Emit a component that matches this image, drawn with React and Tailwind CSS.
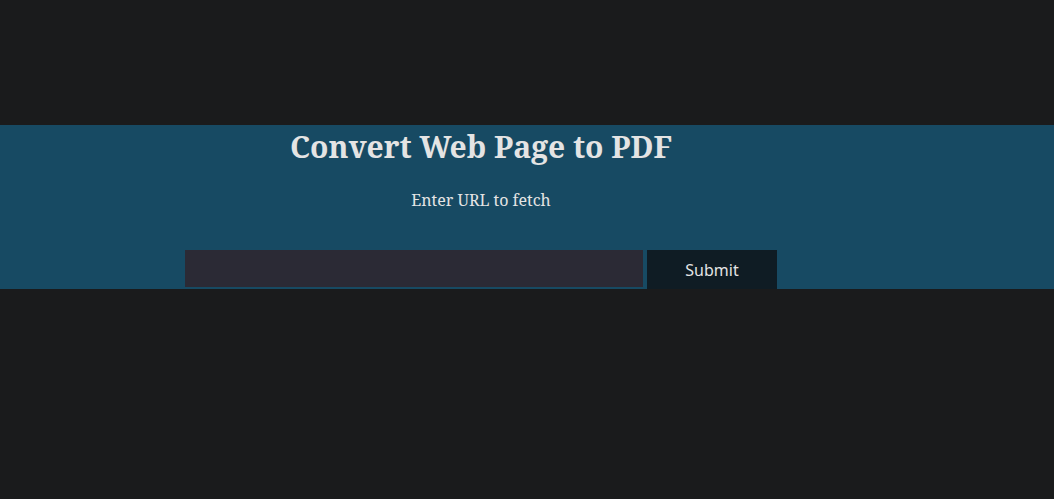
import React, { useState } from "react";

// 웹 페이지를 PDF로 변환하는 폼
const App = () => {
  const [url, setUrl] = useState("");

  return (
    <div className="min-h-screen bg-[#1a1b1c] pt-[125px]">
      <div className="bg-[#174a63] h-[164px] overflow-hidden">
        <div className="w-[962px] flex flex-col items-center">
          <h1 className="text-[30px] leading-[44px] font-bold text-[#e4e4e4] font-['Noto_Serif','DejaVu_Serif',serif]">
            Convert Web Page to PDF
          </h1>
          <p className="mt-[19px] text-[16px] leading-[24px] text-[#e4e4e4] font-['Noto_Serif','DejaVu_Serif',serif]">
            Enter URL to fetch
          </p>
          <form
            className="mt-[38px] flex items-start gap-[4px]"
            onSubmit={(e) => e.preventDefault()}
          >
            <input
              type="text"
              value={url}
              onChange={(e) => setUrl(e.target.value)}
              className="w-[458px] h-[37px] bg-[#2b2a35] text-[#e4e4e4] px-2 outline-none"
            />
            <button
              type="submit"
              className="w-[130px] h-[42px] bg-[#0f1c24] text-[#e4e4e4] text-[16px] pb-[3px] font-['Noto_Sans','DejaVu_Sans',sans-serif]"
            >
              Submit
            </button>
          </form>
        </div>
      </div>
    </div>
  );
};

export default App;
